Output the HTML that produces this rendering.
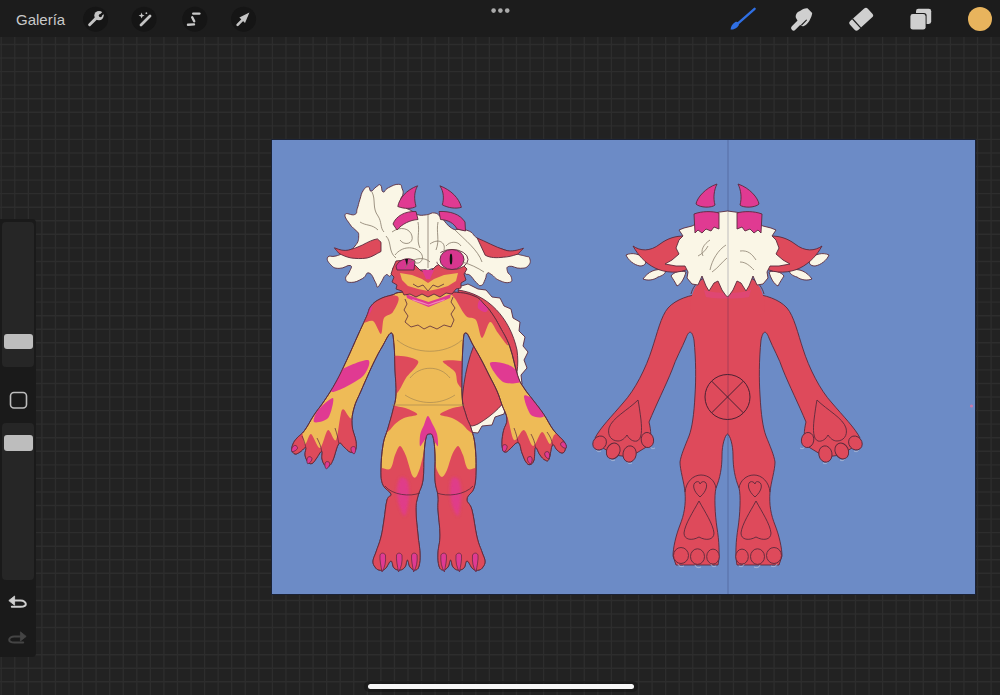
<!DOCTYPE html>
<html><head><meta charset="utf-8">
<style>
html,body{margin:0;padding:0;width:1000px;height:695px;overflow:hidden;background:#252525;font-family:"Liberation Sans",sans-serif;}
#bg{position:absolute;left:0;top:0;width:1000px;height:695px;background:#222222;}
svg{position:absolute;left:0;top:0;}
</style></head><body>
<div id="bg"></div>
<svg width="1000" height="695" viewBox="0 0 1000 695">
<path fill="none" stroke="#2d2d2d" stroke-width="1.4" d="M1.20,37 V695 M14.76,37 V695 M28.32,37 V695 M41.88,37 V695 M55.44,37 V695 M69.00,37 V695 M82.56,37 V695 M96.12,37 V695 M109.68,37 V695 M123.24,37 V695 M136.80,37 V695 M150.36,37 V695 M163.92,37 V695 M177.48,37 V695 M191.04,37 V695 M204.60,37 V695 M218.16,37 V695 M231.72,37 V695 M245.28,37 V695 M258.84,37 V695 M272.40,37 V695 M285.96,37 V695 M299.52,37 V695 M313.08,37 V695 M326.64,37 V695 M340.20,37 V695 M353.76,37 V695 M367.32,37 V695 M380.88,37 V695 M394.44,37 V695 M408.00,37 V695 M421.56,37 V695 M435.12,37 V695 M448.68,37 V695 M462.24,37 V695 M475.80,37 V695 M489.36,37 V695 M502.92,37 V695 M516.48,37 V695 M530.04,37 V695 M543.60,37 V695 M557.16,37 V695 M570.72,37 V695 M584.28,37 V695 M597.84,37 V695 M611.40,37 V695 M624.96,37 V695 M638.52,37 V695 M652.08,37 V695 M665.64,37 V695 M679.20,37 V695 M692.76,37 V695 M706.32,37 V695 M719.88,37 V695 M733.44,37 V695 M747.00,37 V695 M760.56,37 V695 M774.12,37 V695 M787.68,37 V695 M801.24,37 V695 M814.80,37 V695 M828.36,37 V695 M841.92,37 V695 M855.48,37 V695 M869.04,37 V695 M882.60,37 V695 M896.16,37 V695 M909.72,37 V695 M923.28,37 V695 M936.84,37 V695 M950.40,37 V695 M963.96,37 V695 M977.52,37 V695 M991.08,37 V695 M0,44.48 H1000 M0,58.04 H1000 M0,71.60 H1000 M0,85.16 H1000 M0,98.72 H1000 M0,112.28 H1000 M0,125.84 H1000 M0,139.40 H1000 M0,152.96 H1000 M0,166.52 H1000 M0,180.08 H1000 M0,193.64 H1000 M0,207.20 H1000 M0,220.76 H1000 M0,234.32 H1000 M0,247.88 H1000 M0,261.44 H1000 M0,275.00 H1000 M0,288.56 H1000 M0,302.12 H1000 M0,315.68 H1000 M0,329.24 H1000 M0,342.80 H1000 M0,356.36 H1000 M0,369.92 H1000 M0,383.48 H1000 M0,397.04 H1000 M0,410.60 H1000 M0,424.16 H1000 M0,437.72 H1000 M0,451.28 H1000 M0,464.84 H1000 M0,478.40 H1000 M0,491.96 H1000 M0,505.52 H1000 M0,519.08 H1000 M0,532.64 H1000 M0,546.20 H1000 M0,559.76 H1000 M0,573.32 H1000 M0,586.88 H1000 M0,600.44 H1000 M0,614.00 H1000 M0,627.56 H1000 M0,641.12 H1000 M0,654.68 H1000 M0,668.24 H1000 M0,681.80 H1000"/>
 <rect x="271" y="139" width="705" height="456" fill="#1a2236"/>
 <rect x="272" y="140" width="703" height="454" fill="#6c8bc6"/>
<g id="back" stroke="#5a2a3c" stroke-width="0.9" stroke-linejoin="round">
 <path fill="#de4a5b" d="M727.5,292.5 L703.0,293.5 C690.0,295.0 676.0,299.0 668.0,308.0 C661.0,316.0 657.0,334.0 652.0,349.0 C646.0,368.0 635.0,390.0 623.0,403.0 C612.0,416.0 600.0,428.0 595.0,438.0 L600.0,446.0 L614.0,455.0 L630.0,457.0 L648.0,446.0 C652.0,440.0 651.0,430.0 649.0,422.0 C656.0,405.0 666.0,385.0 672.0,370.0 C676.0,358.0 682.0,348.0 686.0,338.0 C689.0,330.0 692.0,330.0 694.0,340.0 C696.0,360.0 696.0,380.0 695.0,395.0 C694.0,415.0 692.0,428.0 689.0,436.0 C685.0,446.0 681.0,455.0 680.0,462.0 C680.0,470.0 684.0,482.0 685.0,492.0 C686.0,505.0 684.0,515.0 680.0,525.0 C676.0,535.0 673.0,548.0 673.0,556.0 L676.0,565.0 L718.0,565.0 C720.0,555.0 719.0,540.0 717.0,528.0 C715.0,515.0 714.0,495.0 716.0,488.0 C720.0,478.0 722.0,468.0 722.0,455.0 C722.0,445.0 725.0,435.0 727.5,434.0 C730.0,435.0 733.0,445.0 733.0,455.0 C733.0,468.0 735.0,478.0 739.0,488.0 C741.0,495.0 740.0,515.0 738.0,528.0 C736.0,540.0 735.0,555.0 737.0,565.0 L779.0,565.0 L782.0,556.0 C782.0,548.0 779.0,535.0 775.0,525.0 C771.0,515.0 769.0,505.0 770.0,492.0 C771.0,482.0 775.0,470.0 775.0,462.0 C774.0,455.0 770.0,446.0 766.0,436.0 C763.0,428.0 761.0,415.0 760.0,395.0 C759.0,380.0 759.0,360.0 761.0,340.0 C763.0,330.0 766.0,330.0 769.0,338.0 C773.0,348.0 779.0,358.0 783.0,370.0 C789.0,385.0 799.0,405.0 806.0,422.0 C804.0,430.0 803.0,440.0 807.0,446.0 L825.0,457.0 L841.0,455.0 L855.0,446.0 L860.0,438.0 C855.0,428.0 843.0,416.0 832.0,403.0 C820.0,390.0 809.0,368.0 803.0,349.0 C798.0,334.0 794.0,316.0 787.0,308.0 C779.0,299.0 765.0,295.0 752.0,293.5 L727.5,292.5 Z"/>
 <circle cx="727.5" cy="397" r="22.5" fill="none" stroke="#4a2232" stroke-width="1"/>
 <path d="M711.6,381.1 L743.4,412.9 M743.4,381.1 L711.6,412.9" stroke="#4a2232" stroke-width="1"/>
 <g id="bl">
  <!-- hand pad heart -->
  <path fill="none" d="M638,400 C628,410 612,418 609,428 C607,436 612,441 618,441 C622,441 625,438 627,435 C629,439 633,442 637,441 C642,439 642,430 641,420 C640,412 639,405 638,400 Z"/>
  <g fill="none" stroke="#b9c3d9" stroke-width="0.8">
   <path d="M596,449 C597,452 599,452 601,451"/><path d="M610,458 C611,461 613,461 615,460"/><path d="M627,461 C628,464 630,464 632,463"/><path d="M650,446 C651,449 653,449 655,448"/>
   <path d="M678,564 C679,567 682,567 684,566"/><path d="M695,565 C696,568 699,568 701,567"/><path d="M711,564 C712,567 714,567 716,566"/>
  </g>
  <ellipse fill="#de4a5b" transform="translate(599.6,443) rotate(40)" rx="6.4" ry="7.4"/>
  <ellipse fill="#de4a5b" transform="translate(613.2,451) rotate(25)" rx="6.6" ry="8.2"/>
  <ellipse fill="#de4a5b" transform="translate(629.6,454) rotate(10)" rx="6.6" ry="8.2"/>
  <ellipse fill="#de4a5b" transform="translate(647.4,440) rotate(-10)" rx="6.2" ry="7.6"/>
  <!-- leg heel + pads -->
  <path fill="none" d="M685,492 C686,482 693,475 701,475 C709,475 715,481 716,488"/>
  <path fill="none" d="M700,497 C693,491 692,484 696,482 C698,481 700,482 700,484 C701,482 703,481 705,482 C708,484 707,491 700,497 Z"/>
  <path fill="none" d="M699,501 C693,512 685,524 684,533 C684,540 692,541 699,537 C706,541 714,540 714,533 C713,524 705,512 699,501 Z"/>
  <ellipse fill="#de4a5b" cx="681" cy="555.5" rx="7.5" ry="8"/>
  <ellipse fill="#de4a5b" cx="697.5" cy="556.6" rx="7" ry="7.8"/>
  <ellipse fill="#de4a5b" cx="713" cy="556.6" rx="6.3" ry="7.5"/>
  <!-- ear + tufts -->
  <path fill="#faf6e6" d="M626,255 C632,252 640,254 645,259 C647,263 645,266 640,266 C634,265 628,260 626,255 Z"/>
  <path fill="#faf6e6" d="M643,279 C648,272 655,268 665,270 C667,273 662,276 658,277 C654,280 648,281 643,279 Z"/>
  <path fill="#faf6e6" d="M671,276 C674,272 680,270 686,272 C684,279 681,284 677,286 C675,282 673,279 671,276 Z"/>
  <path fill="#de4a5b" d="M633,246 C640,251 650,252 660,244 C668,238 676,236 684,236 L690,268 C680,274 665,273 655,268 C645,263 638,255 633,246 Z"/>
  <!-- horn block + horn -->
  <path fill="#e03a92" d="M717,184 C705,188 697,198 696,204 C700,208 712,208 715,205 C713,198 714,190 717,184 Z"/>
 </g>
 <use href="#bl" transform="translate(1455,0) scale(-1,1)"/>
 <!-- neck -->
 <path fill="#de4a5b" stroke="none" d="M690,312 C690,284 702,274 727.5,272 C753,274 765,284 765,312 Z"/>
 <path fill="none" d="M691,294 C694,282 705,274 727.5,272 C750,274 761,282 764,294"/>
 <path fill="#e0467e" stroke="none" opacity="0.7" d="M704,290 C715,294 740,294 751,290 L749,297 C738,299 717,299 706,297 Z"/>
 <!-- hair -->
 <path fill="#faf6e6" d="M727.5,211.0 L720.0,212.0 L714.0,213.0 L708.0,216.0 L700.0,222.0 L692.0,226.0 L684.0,228.0 L679.0,230.0 L683.0,236.0 L679.0,240.0 L676.0,248.0 L679.0,254.0 L672.0,260.0 L665.0,264.0 L676.0,266.0 L685.0,266.0 L688.0,272.0 L687.0,278.0 L692.0,284.0 L698.0,285.0 L702.0,276.0 L706.0,286.0 L709.0,291.0 L714.0,283.0 L718.0,281.0 L722.0,290.0 L725.5,295.0 L727.5,297.0 L727.5,297.0 L729.5,295.0 L733.0,290.0 L737.0,281.0 L741.0,283.0 L746.0,291.0 L749.0,286.0 L753.0,276.0 L757.0,285.0 L763.0,284.0 L768.0,278.0 L767.0,272.0 L770.0,266.0 L779.0,266.0 L790.0,264.0 L783.0,260.0 L776.0,254.0 L779.0,248.0 L776.0,240.0 L772.0,236.0 L776.0,230.0 L771.0,228.0 L763.0,226.0 L755.0,222.0 L747.0,216.0 L741.0,213.0 L735.0,212.0 L727.5,211.0 Z"/>
 <path fill="none" stroke="#8c8070" stroke-width="0.8" d="M703,256 C700,250 704,244 710,240 M698,256 C702,254 706,250 708,246 M710,270 C712,260 718,250 726,245 M712,272 C718,268 722,262 727,258 M740,251 C748,250 752,254 756,260 M740,262 C746,262 750,266 754,270"/>
 <g id="hb">
  <path fill="#e03a92" d="M694,214 C702,211 712,211 719,213 L719,229 L714,227 L711,231 L706,229 L702,233 L698,230 L695,233 Z"/>
 </g>
 <use href="#hb" transform="translate(1456,0) scale(-1,1)"/>
</g>

<defs><filter id="blr" x="-50%" y="-50%" width="200%" height="200%"><feGaussianBlur stdDeviation="1.6"/></filter><clipPath id="fb"><path id="fbp" d="M405.0,292.0 C393.0,292.6 397.0,293.6 392.0,295.0 C387.0,296.4 384.2,296.8 380.0,299.0 C375.8,301.2 373.7,302.5 371.0,306.0 C368.3,309.5 369.2,310.5 366.6,316.3 C364.0,322.1 362.0,326.1 358.0,335.0 C354.0,343.9 350.9,351.2 346.5,360.6 C342.1,370.0 340.4,374.0 336.0,382.0 C331.6,390.0 328.7,394.2 324.3,400.8 C319.9,407.4 317.9,409.1 314.0,415.0 C310.1,420.9 308.0,425.8 304.6,430.4 C301.2,435.0 299.3,435.3 297.0,438.0 C294.7,440.7 294.0,441.6 293.0,444.0 C292.0,446.4 291.6,448.0 292.0,450.0 C292.4,452.0 293.4,453.6 295.0,454.0 C296.6,454.4 297.8,453.3 300.0,452.0 C302.2,450.7 304.8,446.9 305.8,447.5 C306.8,448.1 304.6,452.1 305.0,455.0 C305.4,457.9 306.6,460.3 308.0,462.0 C309.4,463.7 310.4,464.1 312.0,463.5 C313.6,462.9 314.1,461.5 316.0,459.0 C317.9,456.5 320.5,451.2 321.7,451.2 C322.9,451.2 321.3,456.1 322.0,459.0 C322.7,461.9 323.6,464.1 325.0,465.5 C326.4,466.9 327.4,467.1 329.0,466.0 C330.6,464.9 331.0,464.4 333.0,460.0 C335.0,455.6 336.6,446.4 338.8,443.8 C341.0,441.2 341.8,445.4 344.0,447.0 C346.2,448.6 347.8,451.2 350.0,452.0 C352.2,452.8 353.8,453.1 355.0,451.0 C356.2,448.9 356.6,446.6 356.0,441.4 C355.4,436.2 352.4,431.7 352.0,425.0 C351.6,418.3 352.2,414.8 354.0,408.0 C355.8,401.2 358.2,397.6 361.0,391.0 C363.8,384.4 365.3,381.1 368.0,375.0 C370.7,368.9 371.9,366.2 374.7,360.6 C377.5,355.0 378.7,352.5 382.0,347.0 C385.3,341.5 388.6,333.4 391.0,333.0 C393.4,332.6 393.2,337.6 394.0,345.0 C394.8,352.4 394.6,360.2 395.0,370.0 C395.4,379.8 396.4,386.0 396.0,394.0 C395.6,402.0 394.6,403.2 393.0,410.0 C391.4,416.8 390.0,421.0 388.0,428.0 C386.0,435.0 384.4,436.6 383.0,445.0 C381.6,453.4 381.0,462.0 381.0,470.0 C381.0,478.0 381.0,480.2 383.0,485.0 C385.0,489.8 390.2,491.0 391.0,494.0 C391.8,497.0 388.4,494.8 387.0,500.0 C385.6,505.2 385.2,512.6 384.0,520.0 C382.8,527.4 382.6,530.6 381.0,537.0 C379.4,543.4 377.6,547.2 376.0,552.0 C374.4,556.8 373.2,558.0 373.0,561.0 C372.8,564.0 373.8,565.2 375.0,567.0 C376.2,568.8 377.0,569.6 379.0,570.0 C381.0,570.4 382.6,570.8 385.0,569.0 C387.4,567.2 389.1,561.2 390.9,561.0 C392.7,560.8 392.2,566.2 394.0,568.0 C395.8,569.8 397.8,570.2 400.0,570.0 C402.2,569.8 403.5,569.0 405.0,567.0 C406.5,565.0 406.4,560.0 407.4,560.0 C408.4,560.0 408.5,565.0 410.0,567.0 C411.5,569.0 413.2,570.2 415.0,570.0 C416.8,569.8 418.0,569.4 419.0,566.0 C420.0,562.6 420.2,559.2 420.0,553.0 C419.8,546.8 418.8,543.6 418.0,535.0 C417.2,526.4 416.0,517.8 416.0,510.0 C416.0,502.2 416.6,502.0 418.0,496.0 C419.4,490.0 421.8,488.2 423.0,480.0 C424.2,471.8 423.4,463.4 424.0,455.0 C424.6,446.6 425.0,442.2 426.0,438.0 C427.0,433.8 427.6,434.2 429.0,434.0 C430.4,433.8 431.8,432.8 433.0,437.0 C434.2,441.2 434.6,446.4 435.0,455.0 C435.4,463.6 434.4,471.8 435.0,480.0 C435.6,488.2 437.4,490.0 438.0,496.0 C438.6,502.0 437.6,502.2 438.0,510.0 C438.4,517.8 440.0,526.4 440.0,535.0 C440.0,543.6 438.2,546.8 438.0,553.0 C437.8,559.2 438.0,562.6 439.0,566.0 C440.0,569.4 441.2,569.8 443.0,570.0 C444.8,570.2 446.5,569.0 448.0,567.0 C449.5,565.0 449.6,560.0 450.6,560.0 C451.6,560.0 451.5,565.0 453.0,567.0 C454.5,569.0 455.8,569.8 458.0,570.0 C460.2,570.2 462.2,569.8 464.0,568.0 C465.8,566.2 465.3,560.8 467.1,561.0 C468.9,561.2 470.6,567.2 473.0,569.0 C475.4,570.8 477.0,570.4 479.0,570.0 C481.0,569.6 481.8,568.8 483.0,567.0 C484.2,565.2 485.2,564.0 485.0,561.0 C484.8,558.0 483.6,556.8 482.0,552.0 C480.4,547.2 479.0,545.4 477.0,537.0 C475.0,528.6 474.0,517.6 472.0,510.0 C470.0,502.4 466.6,503.4 467.0,499.0 C467.4,494.6 472.2,493.8 474.0,488.0 C475.8,482.2 475.8,478.6 476.0,470.0 C476.2,461.4 476.0,453.4 475.0,445.0 C474.0,436.6 472.8,434.0 471.0,428.0 C469.2,422.0 467.8,421.8 466.0,415.0 C464.2,408.2 462.6,408.0 462.0,394.0 C461.4,380.0 462.2,357.2 463.0,345.0 C463.8,332.8 464.0,333.0 466.0,333.0 C468.0,333.0 469.9,339.6 473.0,345.0 C476.1,350.4 478.2,353.9 481.4,359.9 C484.6,365.9 485.9,368.8 489.0,375.0 C492.1,381.2 494.4,385.0 497.0,391.0 C499.6,397.0 500.0,399.4 502.0,405.0 C504.0,410.6 506.7,413.9 507.0,419.0 C507.3,424.1 504.6,425.8 503.6,430.4 C502.6,435.0 502.1,438.1 502.0,442.0 C501.9,445.9 502.2,448.0 503.0,450.0 C503.8,452.0 504.6,452.2 506.0,452.0 C507.4,451.8 507.6,450.9 510.0,449.0 C512.4,447.1 515.8,441.8 518.2,442.6 C520.6,443.4 520.4,449.1 522.0,453.0 C523.6,456.9 524.4,459.7 526.0,462.0 C527.6,464.3 528.4,465.0 530.0,464.6 C531.6,464.2 532.9,463.4 534.0,460.0 C535.1,456.6 534.2,448.5 535.4,447.5 C536.6,446.5 538.1,452.5 540.0,455.0 C541.9,457.5 543.2,459.2 545.0,460.0 C546.8,460.8 547.5,462.0 549.0,459.0 C550.5,456.0 550.9,446.8 552.5,445.0 C554.1,443.2 555.1,448.4 557.0,450.0 C558.9,451.6 560.4,453.0 562.0,453.0 C563.6,453.0 564.5,452.1 565.0,450.0 C565.5,447.9 567.0,446.5 564.7,442.6 C562.4,438.7 557.9,436.0 553.7,430.4 C549.5,424.8 548.0,420.6 543.9,414.5 C539.8,408.4 537.0,405.3 533.0,400.0 C529.0,394.7 527.1,392.9 524.0,388.0 C520.9,383.1 520.4,383.6 517.6,375.4 C514.8,367.2 513.4,356.7 509.9,347.0 C506.4,337.3 503.6,333.7 500.0,327.0 C496.4,320.3 495.0,317.9 491.8,313.3 C488.6,308.7 487.6,307.5 484.0,304.0 C480.4,300.5 480.4,298.4 474.0,296.0 C467.6,293.6 465.8,292.8 452.0,292.0 C438.2,291.2 417.0,291.4 405.0,292.0 Z"/></clipPath></defs>
<g id="front" stroke="#5a2a3c" stroke-width="0.9" stroke-linejoin="round">
 <path fill="#faf6e6" d="M458,287 L468,284 L478,289 L486,290 L492,297 L500,298 L504,306 L511,309 L513,318 L520,322 L519,331 L525,337 L523,346 L528,352 L524,360 L527,368 L521,375 L522,384 L515,392 L514,401 L506,406 L504,414 L495,417 L492,425 L482,426 L478,433 L468,432 L466,424 L478,420 L498,408 L510,392 L514,370 L512,350 L507,332 L498,315 L484,300 L460,294 Z"/>
 <path fill="#de4a5b" d="M458,290 C488,294 510,318 517,350 C521,380 510,405 478,424 C470,428 465,426 462,420 C461,400 464,370 474,345 C476,338 470,334 466,333 Z"/>
 <use href="#fbp" fill="#eebb57"/>
 <g clip-path="url(#fb)" stroke="none">
  <path fill="#de4a5b" d="M360.0,298.0 C365.6,294.1 392.1,293.9 397.0,296.0 C401.9,298.1 394.9,308.7 393.0,312.0 C391.1,315.3 385.8,314.7 384.0,318.0 C382.2,321.3 382.6,333.6 381.0,334.0 C379.4,334.4 376.1,322.8 373.0,321.0 C369.9,319.2 361.9,325.4 360.0,322.0 C358.1,318.6 354.4,301.9 360.0,298.0 Z"/>
  <path fill="#e03a92" d="M362.0,306.0 C363.8,303.8 370.8,301.9 372.0,303.0 C373.2,304.1 371.8,310.8 370.0,313.0 C368.2,315.2 361.2,319.1 360.0,318.0 C358.8,316.9 360.2,308.2 362.0,306.0 Z"/>
  <path fill="#de4a5b" d="M450.0,290.0 C453.6,289.4 472.5,291.8 480.0,296.0 C487.5,300.2 495.8,310.6 500.0,318.0 C504.2,325.4 508.3,342.8 508.0,345.0 C507.7,347.2 500.7,336.4 498.0,333.0 C495.3,329.6 492.4,321.2 490.0,322.0 C487.6,322.8 484.1,338.3 482.0,338.0 C479.9,337.7 478.4,323.3 476.0,320.0 C473.6,316.7 469.0,319.0 466.0,316.0 C463.0,313.0 458.4,303.9 456.0,300.0 C453.6,296.1 446.4,290.6 450.0,290.0 Z"/>
  <path fill="#e03a92" d="M480.0,300.0 C481.8,299.2 489.1,301.2 490.0,303.0 C490.9,304.8 487.8,311.2 486.0,312.0 C484.2,312.8 478.9,309.8 478.0,308.0 C477.1,306.2 478.2,300.8 480.0,300.0 Z"/>
  <path fill="#e03a92" d="M338.0,372.0 C343.4,367.2 364.4,359.2 368.0,360.0 C371.6,360.8 367.4,372.2 362.0,377.0 C356.6,381.8 335.6,392.8 332.0,392.0 C328.4,391.2 332.6,376.8 338.0,372.0 Z"/>
  <path fill="#e03a92" d="M318.0,410.0 C320.9,406.4 331.5,396.8 333.0,398.0 C334.5,399.2 330.9,414.4 328.0,418.0 C325.1,421.6 315.5,423.2 314.0,422.0 C312.5,420.8 315.1,413.6 318.0,410.0 Z"/>
  <path fill="#de4a5b" d="M285.0,430.0 C287.2,422.9 297.0,425.9 300.0,428.0 C303.0,430.1 303.4,443.1 305.0,444.0 C306.6,444.9 308.8,433.4 311.0,434.0 C313.2,434.6 317.4,448.6 320.0,448.0 C322.6,447.4 325.6,431.2 328.0,430.0 C330.4,428.8 333.9,443.0 336.0,440.0 C338.1,437.0 339.9,413.3 342.0,410.0 C344.1,406.7 347.3,415.8 350.0,418.0 C352.7,420.2 358.5,416.4 360.0,425.0 C361.5,433.6 371.2,467.5 360.0,475.0 C348.8,482.5 296.2,481.8 285.0,475.0 C273.8,468.2 282.8,437.1 285.0,430.0 Z"/>
  <path fill="#e03a92" d="M490.0,363.0 C491.2,360.6 506.2,363.3 511.0,366.0 C515.8,368.7 523.2,378.6 522.0,381.0 C520.8,383.4 507.8,384.7 503.0,382.0 C498.2,379.3 488.8,365.4 490.0,363.0 Z"/>
  <path fill="#e03a92" d="M524.0,396.0 C524.5,393.8 531.0,397.0 534.0,400.0 C537.0,403.0 544.5,413.8 544.0,416.0 C543.5,418.2 534.0,418.0 531.0,415.0 C528.0,412.0 523.5,398.2 524.0,396.0 Z"/>
  <path fill="#de4a5b" d="M495.0,430.0 C496.6,421.0 503.1,413.5 506.0,415.0 C508.9,416.5 511.3,437.8 514.0,440.0 C516.7,442.2 521.1,429.1 524.0,430.0 C526.9,430.9 530.3,445.7 533.0,446.0 C535.7,446.3 539.5,432.3 542.0,432.0 C544.5,431.7 547.9,443.7 550.0,444.0 C552.1,444.3 552.2,433.9 556.0,434.0 C559.8,434.1 572.1,438.9 575.0,445.0 C577.9,451.1 587.0,470.5 575.0,475.0 C563.0,479.5 507.0,481.8 495.0,475.0 C483.0,468.2 493.4,439.0 495.0,430.0 Z"/>
  <path fill="#de4a5b" d="M390.0,358.0 C394.2,352.9 415.6,358.0 418.0,361.0 C420.4,364.0 409.0,373.4 406.0,378.0 C403.0,382.6 400.4,389.4 398.0,392.0 C395.6,394.6 391.2,400.1 390.0,395.0 C388.8,389.9 385.8,363.1 390.0,358.0 Z"/>
  <path fill="#de4a5b" d="M443.0,361.0 C444.9,359.8 464.2,359.4 468.0,364.0 C471.8,368.6 469.5,389.0 468.0,392.0 C466.5,395.0 459.9,387.0 458.0,384.0 C456.1,381.0 457.2,375.4 455.0,372.0 C452.8,368.6 441.1,362.2 443.0,361.0 Z"/>
  <path fill="#de4a5b" d="M384.0,403.0 C386.7,398.5 392.4,405.1 396.0,406.0 C399.6,406.9 404.8,407.7 408.0,409.0 C411.2,410.3 417.9,413.2 417.3,414.6 C416.7,416.0 407.3,416.6 404.0,418.0 C400.7,419.4 397.3,422.1 395.0,424.0 C392.7,425.9 391.2,429.2 388.6,431.0 C386.1,432.8 378.7,440.2 378.0,436.0 C377.3,431.8 381.3,407.5 384.0,403.0 Z"/>
  <path fill="#de4a5b" d="M474.0,403.0 C471.3,398.5 465.6,405.1 462.0,406.0 C458.4,406.9 453.3,407.7 450.0,409.0 C446.7,410.3 439.7,413.2 440.0,414.6 C440.3,416.0 448.7,416.6 452.0,418.0 C455.3,419.4 459.4,422.1 462.0,424.0 C464.6,425.9 466.3,429.2 469.0,431.0 C471.7,432.8 479.2,440.2 480.0,436.0 C480.8,431.8 476.7,407.5 474.0,403.0 Z"/>
  <path fill="#e03a92" d="M427.9,416.0 C429.2,416.0 431.6,422.3 433.0,425.0 C434.4,427.7 436.2,430.9 437.0,434.0 C437.8,437.1 438.4,444.9 438.0,446.0 C437.6,447.1 435.4,442.6 434.0,441.0 C432.6,439.4 430.5,435.0 429.0,435.0 C427.5,435.0 425.4,439.4 424.0,441.0 C422.6,442.6 420.6,447.1 420.0,446.0 C419.4,444.9 419.7,437.1 420.3,434.0 C420.9,430.9 422.9,427.7 424.0,425.0 C425.1,422.3 426.5,416.0 427.9,416.0 Z"/>
  <path fill="#de4a5b" d="M376.0,470.0 C378.1,464.6 387.1,471.2 390.0,469.0 C392.9,466.8 393.5,458.4 395.0,455.0 C396.5,451.6 398.4,445.9 400.0,446.0 C401.6,446.1 404.2,451.6 406.0,456.0 C407.8,460.4 410.5,471.9 412.0,475.0 C413.5,478.1 414.8,478.1 416.0,477.0 C417.2,475.9 418.5,472.1 420.0,468.0 C421.5,463.9 425.1,444.4 426.0,450.0 C426.9,455.6 433.5,496.8 426.0,505.0 C418.5,513.2 383.5,510.2 376.0,505.0 C368.5,499.8 373.9,475.4 376.0,470.0 Z"/>
  <path fill="#de4a5b" d="M432.0,450.0 C432.8,444.8 435.5,465.9 437.0,470.0 C438.5,474.1 440.5,477.0 442.0,477.0 C443.5,477.0 445.5,473.3 447.0,470.0 C448.5,466.7 450.4,458.6 452.0,455.0 C453.6,451.4 456.4,446.0 458.0,446.0 C459.6,446.0 461.5,451.6 463.0,455.0 C464.5,458.4 465.4,466.8 468.0,469.0 C470.6,471.2 478.2,464.6 480.0,470.0 C481.8,475.4 487.2,499.8 480.0,505.0 C472.8,510.2 439.2,513.2 432.0,505.0 C424.8,496.8 431.2,455.2 432.0,450.0 Z"/>
  <rect x="368" y="490" width="125" height="90" fill="#de4a5b"/>
  <path fill="#e03a92" filter="url(#blr)" opacity="0.85" d="M400.0,478.0 C401.5,476.5 405.6,477.3 407.0,480.0 C408.4,482.7 409.3,490.6 409.0,496.0 C408.7,501.4 406.5,514.6 405.0,516.0 C403.5,517.4 400.2,508.9 399.0,505.0 C397.8,501.1 396.9,494.1 397.0,490.0 C397.1,485.9 398.5,479.5 400.0,478.0 Z"/>
  <path fill="#e03a92" filter="url(#blr)" opacity="0.85" d="M452.0,478.0 C453.4,476.5 457.6,477.3 459.0,480.0 C460.4,482.7 461.1,490.6 461.0,496.0 C460.9,501.4 459.4,514.6 458.0,516.0 C456.6,517.4 453.2,508.9 452.0,505.0 C450.8,501.1 450.0,494.1 450.0,490.0 C450.0,485.9 450.6,479.5 452.0,478.0 Z"/>
 </g>
 <use href="#fbp" fill="none"/>
 <path fill="none" stroke-width="0.7" d="M305.8,447.5 C305,443 304,440 302,436 M321.7,451.2 C321,446 319,442 317,438 M338.8,443.8 C338,438 337,434 335,428 M518.2,442.6 C517,437 516,433 514,428 M535.4,447.5 C535,442 533,438 531,434 M552.5,445 C552,440 550,436 547,432"/>
 <path fill="none" d="M385,486 C392,495 410,497 420,493 M437,493 C447,497 465,495 473,486" stroke-width="0.8"/>
 <g fill="#e03a92" stroke-width="0.7">
  <path transform="translate(294,449) rotate(40)" d="M0,3.5 C-2.6,2 -2.8,-2.5 -1.5,-3.5 C0,-4.2 1.6,-4 2.2,-2.8 C2.8,-1 2,2 0,3.5 Z"/>
  <path transform="translate(309,460.5) rotate(20)" d="M0,3.5 C-2.6,2 -2.8,-2.5 -1.5,-3.5 C0,-4.2 1.6,-4 2.2,-2.8 C2.8,-1 2,2 0,3.5 Z"/>
  <path transform="translate(327,465.5) rotate(10)" d="M0,3.5 C-2.6,2 -2.8,-2.5 -1.5,-3.5 C0,-4.2 1.6,-4 2.2,-2.8 C2.8,-1 2,2 0,3.5 Z"/>
  <path transform="translate(353.5,450.5) rotate(-10)" d="M0,3.5 C-2.6,2 -2.8,-2.5 -1.5,-3.5 C0,-4.2 1.6,-4 2.2,-2.8 C2.8,-1 2,2 0,3.5 Z"/>
  <path transform="translate(504.5,448.5) rotate(10)" d="M0,3.5 C-2.6,2 -2.8,-2.5 -1.5,-3.5 C0,-4.2 1.6,-4 2.2,-2.8 C2.8,-1 2,2 0,3.5 Z"/>
  <path transform="translate(530,460.5) rotate(-10)" d="M0,3.5 C-2.6,2 -2.8,-2.5 -1.5,-3.5 C0,-4.2 1.6,-4 2.2,-2.8 C2.8,-1 2,2 0,3.5 Z"/>
  <path transform="translate(547.5,455.5) rotate(-20)" d="M0,3.5 C-2.6,2 -2.8,-2.5 -1.5,-3.5 C0,-4.2 1.6,-4 2.2,-2.8 C2.8,-1 2,2 0,3.5 Z"/>
  <path transform="translate(564,445.5) rotate(-40)" d="M0,3.5 C-2.6,2 -2.8,-2.5 -1.5,-3.5 C0,-4.2 1.6,-4 2.2,-2.8 C2.8,-1 2,2 0,3.5 Z"/>
  <path d="M380,555 C379.5,560 381,566 382,572 C385,567 386,562 385.5,555 C384,552.5 381,552.5 380,555 Z"/>
  <path d="M396.5,555 C396.0,560 397.5,566 398.5,572 C401.5,567 402.5,562 402.0,555 C400.5,552.5 397.5,552.5 396.5,555 Z"/>
  <path d="M411.6,555 C411.1,560 412.6,566 413.6,572 C416.6,567 417.6,562 417.1,555 C415.6,552.5 412.6,552.5 411.6,555 Z"/>
  <path d="M446.4,555 C446.9,560 445.4,566 444.4,572 C441.4,567 440.4,562 440.9,555 C442.4,552.5 445.4,552.5 446.4,555 Z"/>
  <path d="M461.5,555 C462.0,560 460.5,566 459.5,572 C456.5,567 455.5,562 456.0,555 C457.5,552.5 460.5,552.5 461.5,555 Z"/>
  <path d="M478,555 C478.5,560 477,566 476,572 C473,567 472,562 472.5,555 C474,552.5 477,552.5 478,555 Z"/>
 </g>
 <path fill="#e03a92" stroke="none" d="M406,294 C414,297 422,300 428.5,302 C435,300 443,297 451,294 L450,298 C443,301 436,304 428.5,307 C421,304 414,301 407,298 Z"/>
 <path fill="#f08ab8" stroke="none" d="M412,299 L422,302 L428.5,304.5 L435,302 L445,299 L444,300.5 L428.5,305.5 L413,300.5 Z"/>
 <path fill="none" stroke-width="0.8" d="M405,299 L407,304 L404,310 L408,316 L405,322 L411,327 L418,325 L424,329 L430,326 L437,329 L444,325 L451,327 L454,320 L451,314 L455,308 L451,302 L453,297"/>
 <path fill="none" stroke="#9a8050" stroke-width="0.6" d="M397,340 C415,355 445,355 462,340 M410,378 C420,365 440,365 450,378 M405,395 C420,405 440,405 455,395 M392,405 L465,405"/>
 <path fill="#faf6e6" d="M345.2,214.5 C346.3,211.7 351.5,216.1 354.7,214.5 C357.9,212.9 355.9,212.4 357.3,208.5 C358.7,204.6 358.2,204.6 359.8,199.8 C361.4,195.0 361.0,193.8 363.3,190.4 C365.6,187.0 366.4,186.7 368.5,186.9 C370.6,187.1 368.9,191.2 371.0,191.2 C373.1,191.2 373.6,188.5 376.2,186.9 C378.8,185.3 378.8,183.8 380.6,185.2 C382.4,186.6 381.0,191.3 383.1,192.0 C385.2,192.7 384.1,189.9 388.3,187.8 C392.5,185.7 395.0,184.1 398.7,184.3 C402.4,184.5 401.0,186.0 402.1,188.6 C403.2,191.2 403.3,191.0 403.0,194.0 C402.7,197.0 400.5,196.5 401.0,200.0 C401.5,203.5 402.1,204.1 405.0,207.0 C407.9,209.9 408.6,208.9 412.0,211.0 C415.4,213.1 413.7,213.7 417.6,214.7 C421.5,215.7 422.0,215.3 426.6,214.8 C431.2,214.3 430.9,212.1 434.9,213.0 C438.9,213.9 437.1,214.0 441.5,218.0 C445.9,222.0 446.5,224.9 451.4,228.0 C456.3,231.1 454.8,228.7 459.7,229.6 C464.6,230.5 464.9,229.0 469.6,231.3 C474.3,233.6 471.8,234.4 477.2,238.1 C482.6,241.8 482.6,241.8 490.0,245.0 C497.4,248.2 497.8,247.6 505.0,250.0 C512.2,252.4 511.5,252.3 517.0,254.0 C522.5,255.7 522.1,255.1 525.5,256.2 C528.9,257.3 528.8,255.8 529.6,258.2 C530.4,260.6 531.0,262.6 528.6,265.3 C526.2,268.0 525.6,268.0 520.5,268.3 C515.4,268.6 512.9,265.5 509.4,266.3 C505.9,267.1 506.9,268.3 507.4,271.3 C507.9,274.3 510.9,274.4 511.4,277.4 C511.9,280.4 512.6,281.6 509.4,282.4 C506.2,283.2 504.1,282.5 499.3,280.4 C494.5,278.3 494.5,276.3 491.3,274.4 C488.1,272.5 488.8,272.1 487.2,273.4 C485.6,274.7 486.8,276.2 485.2,279.4 C483.6,282.6 483.6,284.7 481.2,285.5 C478.8,286.3 479.2,285.1 476.2,282.4 C473.2,279.7 473.1,277.8 470.1,275.4 C467.1,273.0 466.9,275.6 465.0,273.4 C463.1,271.2 469.7,268.7 463.0,267.3 C456.3,265.9 451.5,267.3 440.0,268.0 C428.5,268.7 431.7,269.5 420.0,270.0 C408.3,270.5 402.9,270.7 396.0,270.0 C389.1,269.3 395.7,265.9 394.2,267.4 C392.7,268.9 392.7,273.8 390.5,275.8 C388.3,277.8 388.3,273.1 385.8,274.9 C383.3,276.7 383.3,279.2 381.1,282.4 C378.9,285.6 378.9,287.0 377.4,287.0 C375.9,287.0 377.7,286.1 375.5,282.4 C373.3,278.7 372.5,274.0 369.0,273.0 C365.5,272.0 367.1,276.1 362.4,278.6 C357.7,281.1 355.7,282.4 351.2,282.4 C346.7,282.4 346.1,281.3 345.6,278.6 C345.1,275.9 348.0,275.6 349.3,272.1 C350.6,268.6 353.0,266.5 350.3,265.5 C347.6,264.5 344.3,268.6 339.0,268.4 C333.7,268.2 333.6,267.6 330.6,264.6 C327.6,261.6 326.4,259.4 327.8,257.1 C329.2,254.8 331.4,257.4 336.0,256.0 C340.6,254.6 339.9,254.7 345.0,252.0 C350.1,249.3 351.3,250.4 355.0,246.0 C358.7,241.6 358.6,239.9 358.7,235.6 C358.8,231.3 357.6,232.9 355.4,230.0 C353.2,227.1 353.1,229.0 350.4,224.9 C347.7,220.8 344.1,217.3 345.2,214.5 Z"/>
 <path fill="#de4a5b" d="M334.4,247.8 C340,250 344,251 348.4,250.1 C353,249 358,247 362.4,245 C368,242 373,239.5 377.4,238.9 L381,242.2 L381,251.5 C376,254 372,257 367.1,258 C361,259 356,258.5 351.2,258 C346,257 342,255 339,253.4 C337,251 335.5,249.5 334.4,247.8 Z"/>
 <path fill="#de4a5b" d="M477.2,238.1 C485,241 495,247 505.4,250.2 C512,252 518,250 523.5,248.2 C521,251 519,253 517.5,254.2 C512,256 508,257 503.4,257.2 C497,258 490,258 485.2,255.2 Z"/>
 <path fill="#de4a5b" d="M393,268 L391,274 L394,277 L392,282 L397,285 L396,289 L402,291 L404,295 L410,294 L416,297 L422,294 L428,297 L434,294 L440,297 L446,293 L452,294 L456,289 L461,288 L461,283 L466,280 L464,274 L467,269 L462,264 L455,266 L442,263 L436,266 L428,274 L420,270 L415,265 L405,260 L396,261 Z"/>
 <path fill="#eebb57" stroke="none" d="M400,273 L412,275 L422,279 L428,283 L434,279 L444,275 L458,273 L456,281 L448,286 L438,289 L428,291 L418,289 L408,286 L402,280 Z"/>
 <path fill="none" stroke-width="0.8" d="M413,284 L418,287 L423,285 L428,291 L433,285 L438,287 L444,284"/>
 <path fill="#e03a92" stroke="none" d="M422,270 L434,270 L430,279 L426,279 Z"/>
 <ellipse cx="452" cy="259.5" rx="16" ry="10" fill="#faf6e6"/>
 <ellipse cx="452" cy="259.5" rx="12" ry="10" fill="#d8368f"/>
 <ellipse cx="451" cy="259" rx="1.3" ry="5.5" fill="#111" stroke="none"/>
 <path fill="#d8368f" d="M396,266 C400,258 410,257 415,261 L414,270 L397,270 Z"/>
 <path fill="#111" stroke="none" d="M405,259 L408,259 L407,266 Z"/>
 <path fill="#faf6e6" stroke="none" d="M396,246 C392,238 398,228 410,226 C418,218 430,218 440,224 C448,230 446,240 440,246 C442,256 436,266 428,270 C420,268 416,262 414,256 C404,258 398,252 396,246 Z"/>
 <path fill="none" stroke="#857a6a" stroke-width="0.8" d="M392,232 C400,226 410,228 412,236 C414,244 404,246 400,240 M395,255 C402,246 414,246 420,252 C426,258 420,266 414,262 M405,268 C410,258 424,256 430,262 M430,244 C438,238 446,242 444,250 M455,230 C465,240 478,250 482,262 M446,246 C450,241 458,241 461,246 M418,222 C420,232 416,240 420,248 M438,222 C436,232 440,240 436,250 M372,192 C376,200 372,208 378,216 C382,222 380,228 384,232 M360,222 C366,226 372,224 378,230 M386,236 C392,242 388,252 396,258 M428,214 L428,268 M462,262 C470,264 478,268 484,272"/>
 <path fill="#e03a92" d="M417.6,185.8 C406,190 399,199 397.8,206.5 C404,209 412,209 416,206.5 C414,199 414,192 417.6,185.8 Z"/>
 <path fill="#e03a92" d="M439.9,185.8 C444,192 444,199 442.3,204.8 C448,208 456,209 461.4,207.3 C459,198 451,190 439.9,185.8 Z"/>
 <path fill="#e03a92" d="M393,224 C396,216 405,211 416,211.5 L418,219.5 C410,220 402,224 397,230 Z"/>
 <path fill="#e03a92" d="M439,211.5 C450,211 460,214 465,222 L465.5,231 L457,229 C454,223 448,220 440.5,219.5 Z"/>
</g>

 <line x1="728" y1="140" x2="728" y2="594" stroke="rgba(30,30,70,0.2)" stroke-width="1.3"/>
 <circle cx="971.5" cy="406" r="1.6" fill="#c878a8"/>
<g id="ui">
 <rect x="0" y="0" width="1000" height="37" fill="#1c1c1c"/>
 <text x="16" y="24.5" font-family="Liberation Sans" font-size="15" fill="#c9c9c9">Galería</text>
 <circle cx="95.6" cy="19.2" r="12.5" fill="#151515"/>
 <circle cx="144" cy="19.2" r="12.5" fill="#151515"/>
 <circle cx="194.8" cy="19.2" r="12.5" fill="#151515"/>
 <circle cx="243.6" cy="19.2" r="12.5" fill="#151515"/>
 <!-- wrench -->
 <path d="M89.6,24.8 L97,17.4" stroke="#c4c4c4" stroke-width="2.9" stroke-linecap="round"/>
 <circle cx="99" cy="15.6" r="4.7" fill="#c4c4c4"/>
 <path d="M99.6,14.8 L103.4,11 L105,12.6 L101.2,16.4 Z" fill="#151515"/>
 <circle cx="100.4" cy="15.6" r="1.6" fill="#151515"/>
 <!-- magic wand -->
 <path d="M141,25 L150,16" stroke="#c4c4c4" stroke-width="2.8" stroke-linecap="round"/>
 <path d="M141.6,12.6 L142.4,14.8 L144.6,15.6 L142.4,16.4 L141.6,18.6 L140.8,16.4 L138.6,15.6 L140.8,14.8 Z" fill="#c4c4c4"/>
 <circle cx="146.4" cy="13.2" r="0.9" fill="#c4c4c4"/>
 <!-- selection -->
 <g stroke="#c9c9c9" stroke-width="2.4" stroke-linecap="round" fill="none">
  <path d="M193.2,13.6 L199.4,13.6"/>
  <path d="M192.2,17.2 L194.2,21.2"/>
  <path d="M188,24.8 L194,24.4"/>
 </g>
 <!-- arrow -->
 <path d="M237.6,24.8 L246,16.4" stroke="#c4c4c4" stroke-width="2.6" stroke-linecap="round"/>
 <path d="M249.4,12.6 L239.4,17.4 L245,23 Z" fill="#c4c4c4"/>
 <circle cx="493.6" cy="10.6" r="2.3" fill="#aaaaaa"/>
 <circle cx="500.4" cy="10.6" r="2.3" fill="#aaaaaa"/>
 <circle cx="507.2" cy="10.6" r="2.3" fill="#aaaaaa"/>
 <!-- brush -->
 <path d="M737.2,24.2 L754.6,8.8" stroke="#2f6fe3" stroke-width="2.4" stroke-linecap="round"/>
 <path d="M730.6,29.6 C730.8,26.4 732.4,23.6 735.4,22 C737.6,21.2 739.6,23.2 738.6,25.4 C737.2,28 734,29.6 730.6,29.6 Z" fill="#2f6fe3"/>
 <!-- smudge -->
 <path d="M793.6,28 L800.6,21" stroke="#cfcfcf" stroke-width="5" stroke-linecap="round"/>
 <path fill="#cfcfcf" d="M796,18 C795,15 797,12 800,11 C802,9.5 805,8 807.5,8.3 L812.2,13 C812,15.5 811,17.5 810,19.5 C809,22 806,25.5 803.4,26.2 C801.5,26.5 800,25 799,23 Z"/>
 <path d="M806.4,20.2 L801.6,25" stroke="#1c1c1c" stroke-width="1.1" stroke-linecap="round"/>
 <!-- eraser -->
 <g transform="translate(861.2,19.2) rotate(-42)">
  <rect x="-12" y="-6" width="24" height="12" rx="2.6" fill="#cfcfcf"/>
  <path d="M-6.2,-6.2 L-6.2,6.2" stroke="#1c1c1c" stroke-width="1.2"/>
 </g>
 <!-- layers -->
 <rect x="916" y="8.8" width="15.2" height="15.2" rx="2.4" fill="#cfcfcf"/>
 <rect x="909.4" y="13" width="17.2" height="17.2" rx="2.6" fill="#1c1c1c"/>
 <rect x="910.4" y="14" width="15.2" height="15.6" rx="2.4" fill="#cfcfcf"/>
 <circle cx="980" cy="18.9" r="12" fill="#e8b45d"/>
 <rect x="364" y="681" width="274" height="11" rx="5.5" fill="#161616" opacity="0.6"/>
 <rect x="368" y="684" width="266" height="5" rx="2.5" fill="#f6f6f6"/>
 <!-- sidebar -->
 <rect x="-6" y="219" width="42" height="438" rx="4" fill="#1a1a1a"/>
 <rect x="2" y="222" width="32" height="145" rx="4" fill="#262626"/>
 <rect x="2" y="423" width="32" height="157" rx="4" fill="#262626"/>
 <rect x="4" y="334" width="29" height="15" rx="3" fill="#bdbdbd"/>
 <rect x="4" y="435" width="29" height="16" rx="3" fill="#bdbdbd"/>
 <rect x="10.5" y="392.5" width="16" height="15.5" rx="3.5" fill="none" stroke="#bdbdbd" stroke-width="1.6"/>
 <!-- undo -->
 <g fill="none" stroke="#d0d0d0" stroke-width="2" stroke-linecap="round">
  <path d="M14,600.6 L20.6,600.6 C24,600.6 25.8,602.6 25.8,604 C25.8,605.6 24,606.8 20.6,606.8 L11.8,606.8"/>
 </g>
 <path d="M8.8,600.6 L14.6,596 L14.6,605.2 Z" fill="#d0d0d0" stroke="#d0d0d0" stroke-width="0.8" stroke-linejoin="round"/>
 <g fill="none" stroke="#444444" stroke-width="2" stroke-linecap="round">
  <path d="M21,636.4 L14.4,636.4 C11,636.4 9.2,638.4 9.2,639.8 C9.2,641.4 11,642.6 14.4,642.6 L23.2,642.6"/>
 </g>
 <path d="M26.2,636.4 L20.4,631.8 L20.4,641 Z" fill="#444444" stroke="#444444" stroke-width="0.8" stroke-linejoin="round"/>
</g>

</svg>
</body></html>
